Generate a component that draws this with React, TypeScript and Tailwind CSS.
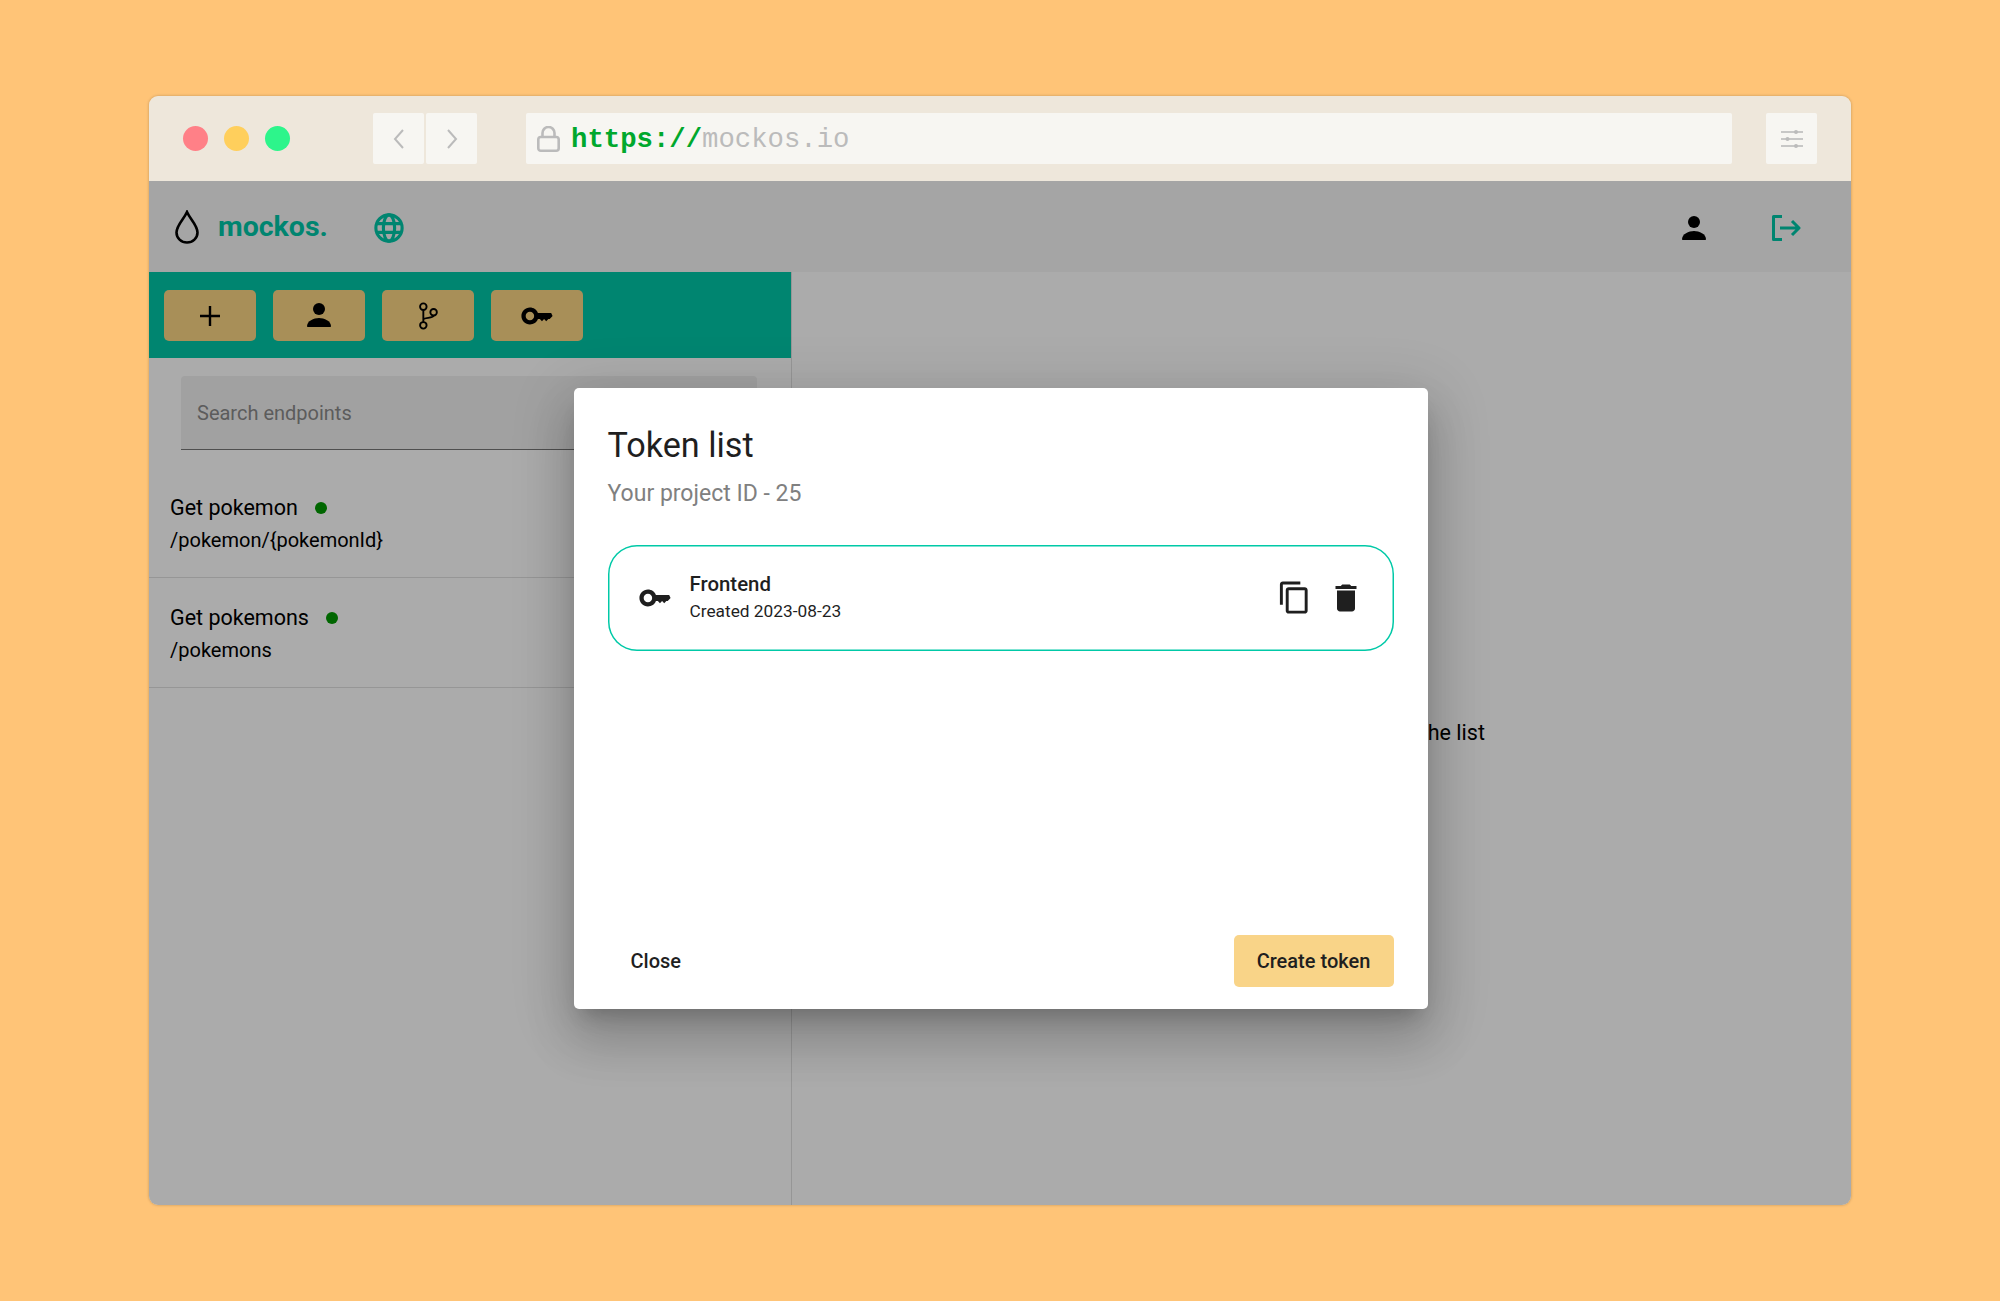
const roboto = "font-['Roboto',sans-serif]";

function Person({ className }: { className: string }) {
  return (
    <svg viewBox="0 0 24 24" fill="currentColor" className={className}>
      <circle cx="12" cy="8" r="4" />
      <path d="M4 19.500c0-3.500 4.500-5.500 8-5.500s8 2 8 5.500c0 .3-.2.500-.5.500h-15c-.3 0-.5-.2-.5-.5z" />
    </svg>
  );
}

function Key({ className }: { className: string }) {
  return (
    <svg viewBox="0 0 24 24" fill="currentColor" className={className}>
      <path d="M22 9.800H12.650C11.830 7.470 9.610 6 7 6c-3.310 0-6 2.690-6 6s2.690 6 6 6c2.610 0 4.830-1.470 5.650-3.800H14l1.500 1.500 1.500-1.500 1.500 1.500 1.500-1.500h1l2-2.200-1-2.200zM7 15c-1.660 0-3-1.340-3-3s1.340-3 3-3 3 1.340 3 3-1.340 3-3 3z" />
    </svg>
  );
}

function ToolButton({ children }: { children: React.ReactNode }) {
  return <button className="w-[92px] h-[51px] rounded-[5px] bg-[#fbd584] flex items-center justify-center text-black">{children}</button>;
}

function NavButton({ d }: { d: string }) {
  return (
    <div className="w-[51px] h-[51px] rounded-[2px] bg-[#f7f6f2] flex items-center justify-center">
      <svg viewBox="0 0 14 24" fill="none" stroke="#bbbbbb" strokeWidth="2" className="w-[14px] h-[24px]">
        <path d={d} />
      </svg>
    </div>
  );
}

function Endpoint({ name, path }: { name: string; path: string }) {
  return (
    <div className="h-[110px] border-b border-[#e0e0e0] pl-[21px] pt-[28px] flex flex-col">
      <div className="flex items-center gap-[17px] h-[24px] text-[21.500px] text-black">
        {name}
        <span className="w-[12px] h-[12px] rounded-full bg-[#009900]" />
      </div>
      <div className="mt-[8px] h-[24px] leading-[24px] text-[20px] text-black">{path}</div>
    </div>
  );
}

export default function App() {
  return (
    <div className="h-[1301px] pt-[96px] bg-[#ffc477] flex items-start justify-center">
      <div className="relative w-[1702px] h-[1109px] rounded-[9px] overflow-hidden flex flex-col shadow-[0_0_3px_rgba(0,0,0,0.25)]">
        {/* Browser chrome */}
        <div className="h-[85px] bg-[#eee7db] flex items-center shrink-0 pl-[34px] pr-[34px]">
          <div className="flex gap-[16px]">
            <span className="w-[25px] h-[25px] rounded-full bg-[#ff8087]" />
            <span className="w-[25px] h-[25px] rounded-full bg-[#ffcf5c]" />
            <span className="w-[25px] h-[25px] rounded-full bg-[#2df58b]" />
          </div>
          <div className="flex gap-[2px] ml-[83px]">
            <NavButton d="M11 3 3 12l8 9" />
            <NavButton d="m3 3 8 9-8 9" />
          </div>
          <div className="ml-[49px] flex-1 h-[51px] rounded-[2px] bg-[#f7f6f2] flex items-center pl-[11px]">
            <svg viewBox="0 0 23 26" fill="none" stroke="#bbbbbb" strokeWidth="2.600" className="w-[23px] h-[26px]">
              <rect x="1.300" y="11" width="20.400" height="13.700" rx="2.500" />
              <path d="M5.500 11V7a6 6 0 0 1 12 0v4" />
            </svg>
            <span className="ml-[11px] mt-[4px] text-[27.300px] font-['Liberation_Mono',monospace]">
              <span className="font-bold text-[#00a82d]">https://</span>
              <span className="text-[#bbbbbb]">mockos.io</span>
            </span>
          </div>
          <div className="ml-[34px] w-[51px] h-[51px] rounded-[2px] bg-[#f7f6f2] flex items-center justify-center">
            <svg viewBox="0 0 22 18" fill="#bbbbbb" className="w-[22px] h-[18px]">
              <rect y="1.200" width="22" height="1.600" />
              <rect y="8.200" width="22" height="1.600" />
              <rect y="15.200" width="22" height="1.600" />
              <circle cx="15" cy="2" r="2" />
              <circle cx="6.500" cy="9" r="2" />
              <circle cx="15" cy="16" r="2" />
            </svg>
          </div>
        </div>

        {/* App */}
        <div className={`relative flex-1 flex flex-col bg-white ${roboto}`}>
          <header className="h-[91px] bg-[#f6f6f6] flex items-center shrink-0 pl-[26px]">
            <svg viewBox="0 0 24 34" fill="none" stroke="black" strokeWidth="2.600" className="w-[24px] h-[34px]">
              <path d="M12 2C9 9 1.500 15 1.500 22.500a10.500 10 0 0 0 21 0C22.500 15 15 9 12 2z" />
            </svg>
            <span className="ml-[19px] mt-[1px] w-[109px] text-[28.500px] font-bold text-[#00c6a8]">mockos.</span>
            <svg viewBox="0 0 24 24" fill="none" stroke="#00c6a8" strokeWidth="2.500" className="ml-[47px] mt-[2px] w-[30px] h-[30px]">
              <circle cx="12" cy="12" r="10.500" />
              <ellipse cx="12" cy="12" rx="4.500" ry="10.500" />
              <path d="M2 8.500h20M2 15.500h20" />
            </svg>
            <Person className="ml-auto mt-[2px] w-[36px] h-[36px] text-black" />
            <svg viewBox="0 0 30 26" fill="none" stroke="#00c6a8" strokeWidth="3" strokeLinejoin="round" className="ml-[59px] mr-[50px] mt-[2px] w-[30px] h-[26px]">
              <path d="M11 1.500H2.500v23H11M9 13h19M21 6l7 7-7 7" />
            </svg>
          </header>

          <div className="flex-1 flex min-h-0">
            <aside className="w-[643px] shrink-0 border-r border-[#e0e0e0] flex flex-col">
              <div className="h-[86px] bg-[#00c6a8] flex items-center gap-[17px] pl-[15px]">
                <ToolButton>
                  <svg viewBox="0 0 24 24" fill="none" stroke="black" strokeWidth="2.400" className="mt-[2px] w-[24px] h-[24px]">
                    <path d="M12 2v20M2 12h20" />
                  </svg>
                </ToolButton>
                <ToolButton>
                  <Person className="w-[36px] h-[36px]" />
                </ToolButton>
                <ToolButton>
                  <svg viewBox="0 0 24 30" fill="none" stroke="black" strokeWidth="2" className="mt-[2px] w-[24px] h-[28px]">
                    <circle cx="7" cy="5" r="3.500" />
                    <circle cx="7" cy="25" r="3.500" />
                    <circle cx="18" cy="11" r="3.500" />
                    <path d="M7 8.500v13M7 19c0-3 11-1 11-4.500" />
                  </svg>
                </ToolButton>
                <ToolButton>
                  <Key className="mt-[2px] w-[34px] h-[34px]" />
                </ToolButton>
              </div>
              <div className="mt-[18px] ml-[32px] mr-[34px] h-[74px] bg-[#f1f1f1] border-b border-[#777777] rounded-t-[4px] flex items-center pl-[16px] text-[20px] text-[#8a8a8a]">
                Search endpoints
              </div>
              <div className="mt-[18px]">
                <Endpoint name="Get pokemon" path="/pokemon/{pokemonId}" />
                <Endpoint name="Get pokemons" path="/pokemons" />
              </div>
            </aside>
            <main className="flex-1 flex items-center justify-center pb-[10px] pr-[10px] text-[21.500px] text-black">
              Please select endpoint from the list
            </main>
          </div>

          {/* Dialog */}
          <div className="absolute inset-0 bg-black/33 flex items-center justify-center pt-[10px] pl-[1px]">
            <div className="w-[854px] h-[621px] bg-white rounded-[5px] shadow-[0_14px_19px_-9px_rgba(0,0,0,0.2),0_31px_48px_4px_rgba(0,0,0,0.14),0_11px_59px_10px_rgba(0,0,0,0.12)] px-[34px] flex flex-col text-[#1f1f1f]">
              <h2 className="mt-[34px] h-[46px] leading-[46px] text-[34.200px] font-normal">Token list</h2>
              <p className="mt-[11px] text-[23px] leading-[30px] text-[#808080]">Your project ID - 25</p>
              <div className="mt-[36px] h-[106px] rounded-[29px] shadow-[inset_0_0_0_1.5px_#00c9a7] flex items-center pl-[30px] pr-[30px]">
                <Key className="w-[34px] h-[34px] text-[#1f1f1f]" />
                <div className="ml-[18px] pb-[2px] flex flex-col">
                  <span className="text-[20.400px] leading-[28px] font-medium">Frontend</span>
                  <span className="text-[17.300px] leading-[26px]">Created 2023-08-23</span>
                </div>
                <svg viewBox="0 0 24 24" fill="currentColor" className="ml-auto w-[35px] h-[35px]">
                  <path d="M16 1H4c-1.100 0-2 .9-2 2v14h2V3h12V1zm3 4H8c-1.100 0-2 .9-2 2v14c0 1.100.9 2 2 2h11c1.100 0 2-.9 2-2V7c0-1.100-.9-2-2-2zm0 16H8V7h11v14z" />
                </svg>
                <svg viewBox="0 0 24 24" fill="currentColor" className="ml-[16px] w-[36px] h-[36px]">
                  <path d="M6 19c0 1.100.9 2 2 2h8c1.100 0 2-.9 2-2V7H6v12zM19 4h-3.500l-1-1h-5l-1 1H5v2h14V4z" />
                </svg>
              </div>
              <div className="mt-auto mb-[22px] flex items-center justify-between">
                <button className="ml-[23px] text-[20px] font-medium">Close</button>
                <button className="w-[160px] h-[52px] rounded-[5px] bg-[#f9d488] text-[20px] font-medium">Create token</button>
              </div>
            </div>
          </div>
        </div>
      </div>
    </div>
  );
}
